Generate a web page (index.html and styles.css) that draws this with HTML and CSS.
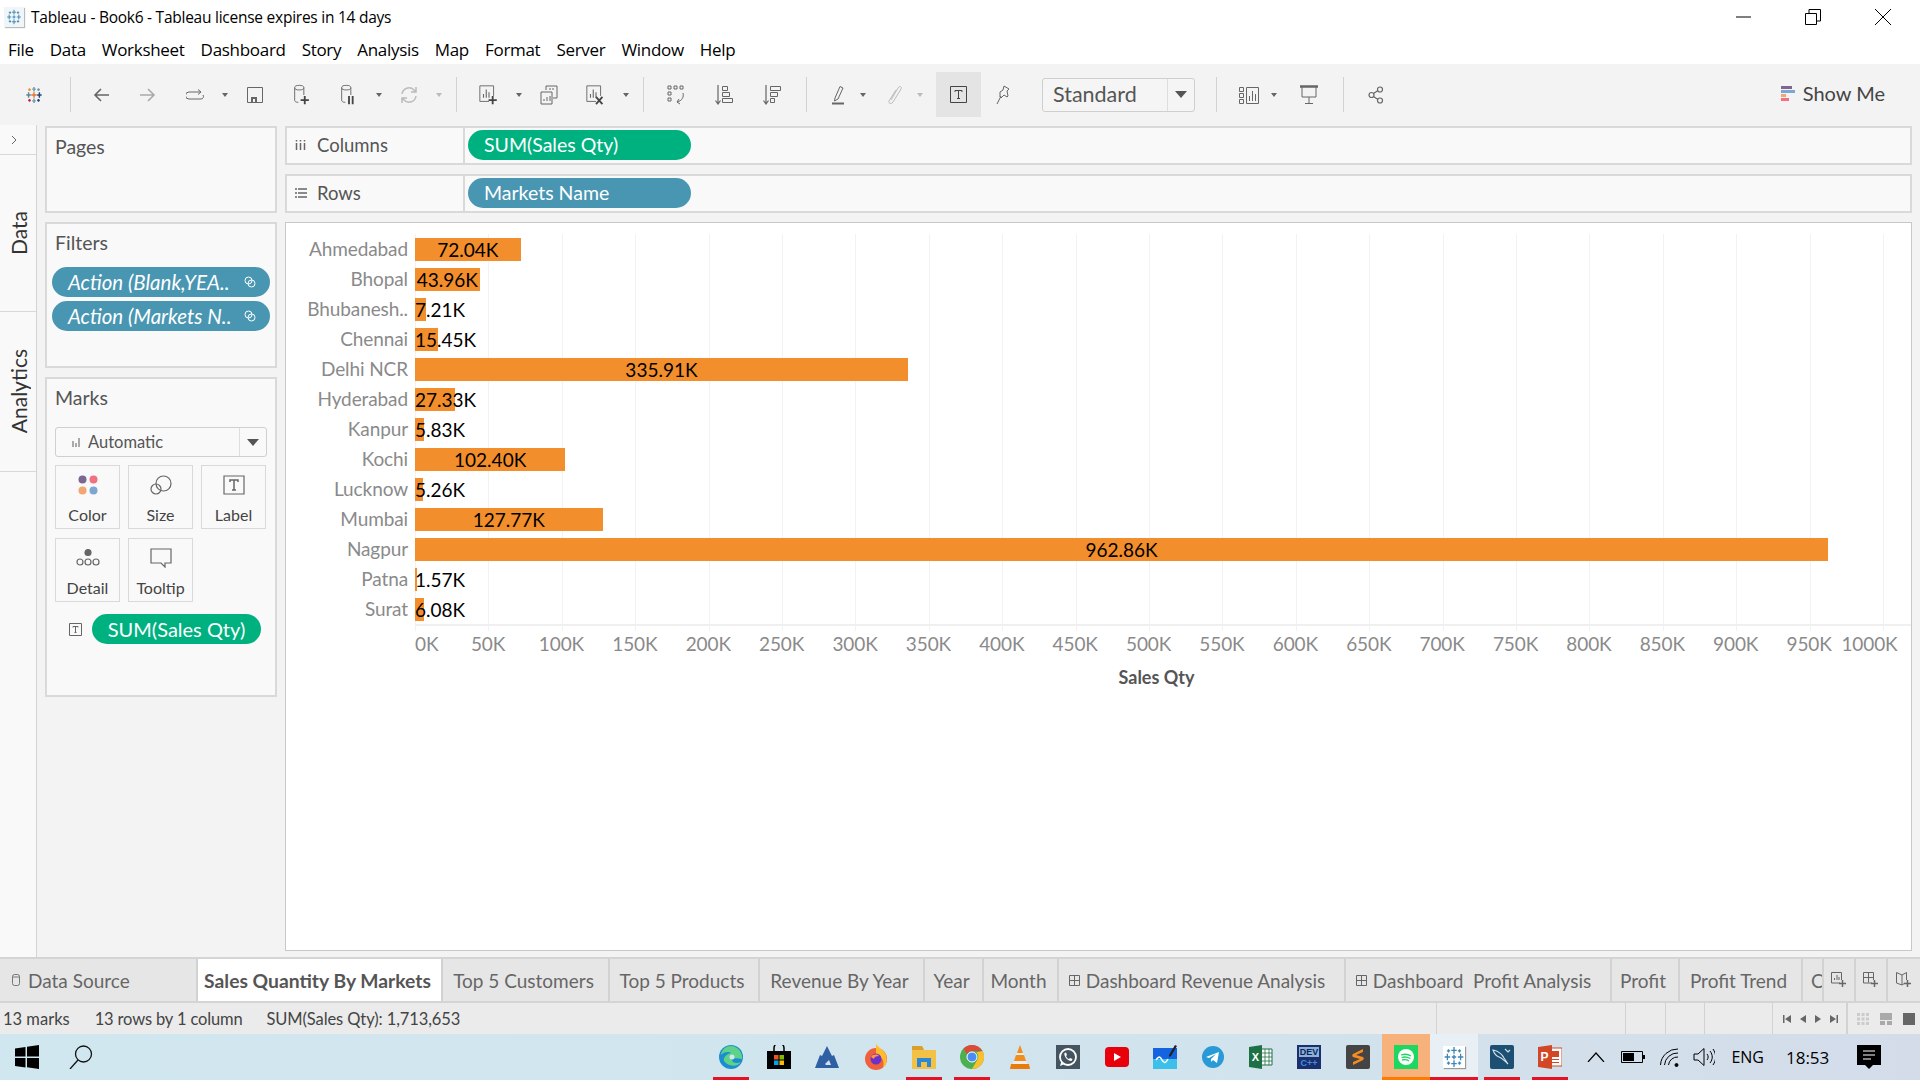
FILE: index.html
```html
<!DOCTYPE html>
<html lang="en">
<head>
    <meta charset="UTF-8">
    <title>Tableau - Book6 - Tableau license expires in 14 days</title>
    <link rel="stylesheet" href="styles.css">
</head>
<body>
    <svg class="defs" width="0" height="0">
        <symbol id="logo" viewBox="0 0 20 20">
            <path d="M10 1v6M7.5 4h5M10 13v6M7.5 16h5M4 7v6M1.5 10h5M16 7v6M13.500 10h5M5 3v3M3.500 4.500h3M15 3v3M13.500 4.500h3M5 14v3M3.500 15.500h3M15 14v3M13.500 15.500h3M10 8v4M8 10h4" fill="none" stroke="currentColor" stroke-width="1.200"/>
        </symbol>
        <symbol id="db" viewBox="0 0 20 24">
            <ellipse cx="7" cy="4" rx="5" ry="2.500" fill="none" stroke="#666"/>
            <path d="M2 4v14c0 1 1.500 2 4 2M12 4v8" fill="none" stroke="#666"/>
        </symbol>
        <symbol id="sheet" viewBox="0 0 22 24">
            <path d="M11 19H1V2h15v11" fill="none" stroke="#666"/>
            <path d="M5 15v-4M8 15V6M11 15V9" stroke="#666" fill="none" stroke-width="1.200"/>
        </symbol>
    </svg>

    <div class="titlebar">
        <span class="app-icon"><svg width="16" height="16"><use href="#logo"/></svg></span>
        <span class="title-text">Tableau - Book6 - Tableau license expires in 14 days</span>
        <div class="win-btns">
            <svg width="16" height="16" viewBox="0 0 16 16"><path d="M1 8h15" stroke="#000"/></svg>
            <svg width="16" height="16" viewBox="0 0 16 16"><path d="M.5 4.500h11v11H.5zM4 4V.5h11.500V12H12" fill="none" stroke="#000"/></svg>
            <svg width="16" height="16" viewBox="0 0 16 16"><path d="M0 0l16 16M16 0L0 16" stroke="#000"/></svg>
        </div>
    </div>

    <nav class="menubar">
        <span>File</span><span>Data</span><span>Worksheet</span><span>Dashboard</span><span>Story</span><span>Analysis</span><span>Map</span><span>Format</span><span>Server</span><span>Window</span><span>Help</span>
    </nav>

    <div class="toolbar">
        <span class="tool-logo">
            <svg width="18" height="18" viewBox="0 0 20 20" fill="none" stroke-width="1.600">
                <path d="M10 1v5M8 3.500h4M10 14v5M8 16.500h4" stroke="#7099a6"/>
                <path d="M4 7v6M1.500 10h5" stroke="#59879b"/>
                <path d="M16 7v6M13.500 10h5" stroke="#1f447e"/>
                <path d="M10 7v6M7 10h6" stroke="#e8762b"/>
                <path d="M5 2.500v3M3.500 4h3" stroke="#eb912b"/>
                <path d="M15 2.500v3M13.500 4h3" stroke="#7099a6"/>
                <path d="M5 14.500v3M3.500 16h3" stroke="#c72035"/>
                <path d="M15 14.500v3M13.500 16h3" stroke="#1f457e"/>
            </svg>
        </span>
        <i class="sep"></i>
        <span class="tool"><svg width="16" height="14" viewBox="0 0 16 14"><path d="M16 7H2M8 1L2 7l6 6" fill="none" stroke="#666" stroke-width="1.600"/></svg></span>
        <span class="tool gap"><svg width="16" height="14" viewBox="0 0 16 14"><path d="M0 7h14M8 1l6 6-6 6" fill="none" stroke="#aaa" stroke-width="1.600"/></svg></span>
        <span class="tool gap"><svg width="18" height="12" viewBox="0 0 18 12"><path d="M14 3H3a2.500 2.500 0 0 0 0 7h12a2.500 2.500 0 0 0 2-4M12 .5L15 3l-3 2.500" fill="none" stroke="#666"/></svg></span>
        <span class="drop"></span>
        <span class="tool"><svg width="16" height="16" viewBox="0 0 16 16"><path d="M.5.5h15v15H.5z" fill="none" stroke="#666"/><path d="M4 15v-5h6v5H8v-3H6v3z" fill="#666"/></svg></span>
        <span class="tool gap"><svg width="20" height="22" viewBox="0 0 20 24"><use href="#db"/><path d="M13 13v9M8.500 17.500h9" stroke="#444" stroke-width="2"/></svg></span>
        <span class="tool gap"><svg width="20" height="22" viewBox="0 0 20 24"><use href="#db"/><path d="M10 13v9M14 13v9" stroke="#444" stroke-width="2"/></svg></span>
        <span class="drop"></span>
        <span class="tool"><svg width="18" height="20" viewBox="0 0 18 20" fill="none" stroke="#bbb" stroke-width="1.500"><path d="M2 9a7 7 0 0 1 12-4l2 2M16 11a7 7 0 0 1-12 4l-2-2M16 2v5h-5M2 18v-5h5"/></svg></span>
        <span class="drop light"></span>
        <i class="sep tight"></i>
        <span class="tool"><svg width="22" height="22" viewBox="0 0 22 24"><use href="#sheet"/><path d="M15 13v9M10.500 17.500h9" stroke="#444" stroke-width="2"/></svg></span>
        <span class="drop"></span>
        <span class="tool"><svg width="18" height="20" viewBox="0 0 18 20" fill="none" stroke="#666"><path d="M6 5V1h11v12h-4"/><path d="M1 7h11v12H1zM4 16v-2M7 16v-4M10 16v-5M10 5V3M13 5V3"/></svg></span>
        <span class="tool gap"><svg width="22" height="22" viewBox="0 0 22 24"><use href="#sheet"/><path d="M11 14l7 8M18 14l-7 8" stroke="#444" stroke-width="2"/></svg></span>
        <span class="drop"></span>
        <i class="sep tight"></i>
        <span class="tool"><svg width="18" height="20" viewBox="0 0 18 20" fill="none" stroke="#666"><path d="M1 1h3v3H1zM7 1h3v3H7zM13 1h3v3h-3zM1 7h3v3H1zM1 13h3v3H1zM16 8c1 4-1 8-6 9M12 14l-2 3 3 2"/></svg></span>
        <span class="tool gap wider"><svg width="18" height="20" viewBox="0 0 18 20" fill="none" stroke="#666"><path d="M3 0v18M.5 15.500L3 19l2.500-3.500" stroke-width="1.200"/><path d="M7.500 1.500h5v4h-5zM7.500 7.500h7v4h-7zM7.500 13.500h10v4h-10z"/></svg></span>
        <span class="tool gap wider"><svg width="18" height="20" viewBox="0 0 18 20" fill="none" stroke="#666"><path d="M3 0v18M.5 15.500L3 19l2.500-3.500" stroke-width="1.200"/><path d="M7.500 1.500h10v4h-10zM7.500 7.500h7v4h-7zM7.500 13.500h4v4h-4z"/></svg></span>
        <i class="sep wide"></i>
        <span class="tool"><svg width="14" height="20" viewBox="0 0 14 20" fill="none" stroke="#666"><path d="M4 13L9 1.500l3 1.500-5 11-3.500 2z"/><path d="M1 18.500h12" stroke-width="2"/></svg></span>
        <span class="drop narrow"></span>
        <span class="tool after-drop"><svg width="14" height="20" viewBox="0 0 14 20" fill="none" stroke="#bbb"><path d="M3 15L10 3c2-3 4-1 3 1L5 17c-2 3-5 1-4-1L8 5"/></svg></span>
        <span class="drop narrow light"></span>
        <span class="tool sel"><svg width="17" height="17" viewBox="0 0 17 17" fill="none" stroke="#444"><path d="M.5.5h16v16H.5z"/><path d="M5 6V4.500h7V6M8.500 4.500v8M7 12.500h3"/></svg></span>
        <span class="tool after-drop"><svg width="14" height="20" viewBox="0 0 14 20" fill="none" stroke="#666"><path d="M8 1l5 3-2 2 1 5-1 1-3-2-3 3-1-1 0-5 3-2z"/><path d="M5 11l-4 8"/></svg></span>
        <span class="combo"><span class="combo-text">Standard</span><span class="combo-arrow"></span></span>
        <i class="sep combo-sep"></i>
        <span class="tool"><svg width="20" height="18" viewBox="0 0 20 18" fill="none" stroke="#666"><path d="M.5 1.500h4v4h-4zM.5 7.500h4v4h-4zM.5 13.500h4v4h-4zM7.500 1.500h12v16h-12zM10.500 15v-5M13.500 15V5M16.500 15V8"/></svg></span>
        <span class="drop narrow"></span>
        <span class="tool present"><svg width="18" height="20" viewBox="0 0 18 20" fill="none" stroke="#666"><path d="M0 1.500h18" stroke-width="2.500"/><path d="M2 2v10h14V2M9 12v6M5 18.500h8"/></svg></span>
        <i class="sep tight-r"></i>
        <span class="tool"><svg width="16" height="18" viewBox="0 0 16 18" fill="none" stroke="#666" stroke-width="1.200"><circle cx="3.500" cy="9" r="2.500"/><circle cx="12" cy="3.500" r="2.500"/><circle cx="12" cy="14.500" r="2.500"/><path d="M5.500 7.500l4.500-3M5.500 10.500l4.500 3"/></svg></span>
        <span class="showme">
            <span class="sm-icon"><i class="s1"></i><i class="s2"></i><i class="s3"></i><i class="s4"></i></span>
            Show Me
        </span>
    </div>

    <div class="workspace">
        <aside class="side-tabs">
            <div class="side-top"><svg width="6" height="10" viewBox="0 0 6 10"><path d="M1 1l4 4-4 4" fill="none" stroke="#666"/></svg></div>
            <div class="side-tab data-tab"><span>Data</span></div>
            <div class="side-tab analytics-tab"><span>Analytics</span></div>
        </aside>

        <section class="cards">
            <div class="card pages-card"><h3>Pages</h3></div>
            <div class="card filters-card">
                <h3>Filters</h3>
                <div class="pill filter-pill"><em>Action (Blank,YEA..</em><svg width="12" height="12" viewBox="0 0 12 12" fill="none" stroke="#fff"><circle cx="4.500" cy="4.500" r="3.500"/><circle cx="7.500" cy="7.500" r="3.500"/></svg></div>
                <div class="pill filter-pill"><em>Action (Markets N..</em><svg width="12" height="12" viewBox="0 0 12 12" fill="none" stroke="#fff"><circle cx="4.500" cy="4.500" r="3.500"/><circle cx="7.500" cy="7.500" r="3.500"/></svg></div>
            </div>
            <div class="card marks-card">
                <h3>Marks</h3>
                <div class="marks-select">
                    <svg width="10" height="10" viewBox="0 0 10 10"><path d="M1 4h2v6H1zM4 6h2v4H4zM7 1h2v9H7z" fill="#aaa"/></svg>
                    <span class="marks-type">Automatic</span>
                    <span class="combo-arrow"></span>
                </div>
                <div class="marks-grid">
                    <div class="mark-btn">
                        <svg width="20" height="20" viewBox="0 0 20 20"><circle cx="4.500" cy="4.500" r="4" fill="#7b6790"/><circle cx="15.500" cy="4.500" r="4" fill="#f2707f"/><circle cx="4.500" cy="15.500" r="4" fill="#f2a672"/><circle cx="15.500" cy="15.500" r="4" fill="#7ea6d3"/></svg>
                        <span>Color</span>
                    </div>
                    <div class="mark-btn">
                        <svg width="22" height="20" viewBox="0 0 22 20" fill="none" stroke="#666" stroke-width="1.200"><circle cx="13.500" cy="8.500" r="7.500"/><circle cx="6" cy="14" r="5"/></svg>
                        <span>Size</span>
                    </div>
                    <div class="mark-btn">
                        <svg width="22" height="20" viewBox="0 0 22 20" fill="none" stroke="#666" stroke-width="1.200"><path d="M1 1h20v18H1z"/><path d="M7 7V5h8v2M11 5v10M9 15h4" stroke-width="1.500"/></svg>
                        <span>Label</span>
                    </div>
                    <div class="mark-btn">
                        <svg width="24" height="20" viewBox="0 0 24 20" fill="none" stroke="#666" stroke-width="1.200"><circle cx="12" cy="4.500" r="3" fill="#666"/><circle cx="4" cy="14" r="3"/><circle cx="12" cy="14" r="3"/><circle cx="20" cy="14" r="3"/></svg>
                        <span>Detail</span>
                    </div>
                    <div class="mark-btn">
                        <svg width="22" height="20" viewBox="0 0 22 20" fill="none" stroke="#666" stroke-width="1.200"><path d="M1 1h20v14h-6v4l-4-4H1z"/></svg>
                        <span>Tooltip</span>
                    </div>
                </div>
                <div class="mark-field">
                    <svg width="13" height="13" viewBox="0 0 13 13" fill="none" stroke="#666"><path d="M.5.5h12v12H.5z"/><path d="M4 4.500V3.500h5v1M6.500 3.500v6M5.500 9.500h2"/></svg>
                    <div class="pill green mark-pill">SUM(Sales Qty)</div>
                </div>
            </div>
        </section>

        <section class="sheet">
            <div class="shelf">
                <div class="shelf-label">
                    <svg width="12" height="12" viewBox="0 0 12 12"><path d="M1.500 1v1.500M1.500 4v7M5.500 1v1.500M5.500 4v7M9.500 1v1.500M9.500 4v7" stroke="#666" stroke-width="1.500"/></svg>
                    <span>Columns</span>
                </div>
                <div class="pill green shelf-pill">SUM(Sales Qty)</div>
            </div>
            <div class="shelf">
                <div class="shelf-label">
                    <svg width="12" height="12" viewBox="0 0 12 12"><path d="M0 2h2M3 2h9M0 6h2M3 6h9M0 10h2M3 10h9" stroke="#666" stroke-width="1.400"/></svg>
                    <span>Rows</span>
                </div>
                <div class="pill blue shelf-pill">Markets Name</div>
            </div>

            <div class="view">
                <div class="chart">
                    <div class="row"><span class="row-name">Ahmedabad</span><div class="plot"><div class="bar" style="width:105.7px"><b>72.04K</b></div></div></div>
                    <div class="row"><span class="row-name">Bhopal</span><div class="plot"><div class="bar" style="width:64.5px"><b>43.96K</b></div></div></div>
                    <div class="row"><span class="row-name">Bhubanesh..</span><div class="plot"><div class="bar" style="width:10.6px"><b>7.21K</b></div></div></div>
                    <div class="row"><span class="row-name">Chennai</span><div class="plot"><div class="bar" style="width:22.7px"><b>15.45K</b></div></div></div>
                    <div class="row"><span class="row-name">Delhi NCR</span><div class="plot"><div class="bar" style="width:492.9px"><b>335.91K</b></div></div></div>
                    <div class="row"><span class="row-name">Hyderabad</span><div class="plot"><div class="bar" style="width:40.1px"><b>27.33K</b></div></div></div>
                    <div class="row"><span class="row-name">Kanpur</span><div class="plot"><div class="bar" style="width:8.6px"><b>5.83K</b></div></div></div>
                    <div class="row"><span class="row-name">Kochi</span><div class="plot"><div class="bar" style="width:150.3px"><b>102.40K</b></div></div></div>
                    <div class="row"><span class="row-name">Lucknow</span><div class="plot"><div class="bar" style="width:7.7px"><b>5.26K</b></div></div></div>
                    <div class="row"><span class="row-name">Mumbai</span><div class="plot"><div class="bar" style="width:187.5px"><b>127.77K</b></div></div></div>
                    <div class="row"><span class="row-name">Nagpur</span><div class="plot"><div class="bar" style="width:1413px"><b>962.86K</b></div></div></div>
                    <div class="row"><span class="row-name">Patna</span><div class="plot"><div class="bar" style="width:2.3px"><b>1.57K</b></div></div></div>
                    <div class="row"><span class="row-name">Surat</span><div class="plot"><div class="bar" style="width:8.9px"><b>6.08K</b></div></div></div>
                </div>
                <div class="axis-line"></div>
                <div class="axis">
                    <span>0K</span><span>50K</span><span>100K</span><span>150K</span><span>200K</span><span>250K</span><span>300K</span><span>350K</span><span>400K</span><span>450K</span><span>500K</span><span>550K</span><span>600K</span><span>650K</span><span>700K</span><span>750K</span><span>800K</span><span>850K</span><span>900K</span><span>950K</span><span>1000K</span>
                </div>
                <div class="axis-title">Sales Qty</div>
            </div>
        </section>
    </div>

    <div class="tabs">
        <div class="tab tab-source"><svg width="8" height="12" viewBox="0 0 8 12" fill="none" stroke="#777"><rect x=".5" y=".5" width="7" height="11" rx="2"/><path d="M.5 3h7"/></svg>Data Source</div>
        <div class="tab tab-active">Sales Quantity By Markets</div>
        <div class="tab tab-customers">Top 5 Customers</div>
        <div class="tab tab-products">Top 5 Products</div>
        <div class="tab tab-revenue">Revenue By Year</div>
        <div class="tab tab-year">Year</div>
        <div class="tab tab-month">Month</div>
        <div class="tab tab-dra"><svg width="11" height="11" viewBox="0 0 11 11" fill="none" stroke="#666"><path d="M.5.5h10v10H.5zM5.500.5v10M.5 5.500h10"/></svg>Dashboard Revenue Analysis</div>
        <div class="tab tab-dpa"><svg width="11" height="11" viewBox="0 0 11 11" fill="none" stroke="#666"><path d="M.5.5h10v10H.5zM5.500.5v10M.5 5.500h10"/></svg>Dashboard&nbsp; Profit Analysis</div>
        <div class="tab tab-profit">Profit</div>
        <div class="tab tab-trend">Profit Trend</div>
        <div class="tab tab-cut">C</div>
        <div class="tab tab-new"><svg width="16" height="16" viewBox="0 0 16 16" fill="none" stroke="#666"><path d="M9 11H.5V.5h10V8M3.500 8V6M6 8V3M8 8V5"/><path d="M11.500 8v7M8 11.500h7" stroke-width="1.500"/></svg></div>
        <div class="tab tab-new"><svg width="16" height="16" viewBox="0 0 16 16" fill="none" stroke="#666"><path d="M9 11H.5V.5h10V8M.5 5.500h10M5.500.5v10"/><path d="M11.500 8v7M8 11.500h7" stroke-width="1.500"/></svg></div>
        <div class="tab tab-new"><svg width="16" height="16" viewBox="0 0 16 16" fill="none" stroke="#666"><path d="M9 11l-3 2V3L.5.5V11L6 13M6 3l4.500-2.500V8"/><path d="M11.500 8v7M8 11.500h7" stroke-width="1.500"/></svg></div>
    </div>

    <div class="statusbar">
        <span class="st-marks">13 marks</span>
        <span class="st-rows">13 rows by 1 column</span>
        <span class="st-sum">SUM(Sales Qty): 1,713,653</span>
        <i class="st-cell c1"></i><i class="st-cell c2"></i><i class="st-cell c3"></i><i class="st-cell c4"></i>
        <div class="st-cell st-nav">
            <svg width="8" height="8" viewBox="0 0 8 8"><path d="M0 0h1.500v8H0zM8 0v8L2 4z" fill="#666"/></svg>
            <svg width="6" height="8" viewBox="0 0 6 8"><path d="M6 0v8L0 4z" fill="#666"/></svg>
            <svg width="6" height="8" viewBox="0 0 6 8"><path d="M0 0v8l6-4z" fill="#666"/></svg>
            <svg width="8" height="8" viewBox="0 0 8 8"><path d="M8 0H6.500v8H8zM0 0v8l6-4z" fill="#666"/></svg>
        </div>
        <div class="st-cell st-zoom">
            <svg width="12" height="12" viewBox="0 0 12 12" fill="#ccc"><path d="M0 0h3v3H0zM4.500 0h3v3h-3zM9 0h3v3H9zM0 4.500h3v3H0zM4.500 4.500h3v3h-3zM9 4.500h3v3H9zM0 9h3v3H0zM4.500 9h3v3h-3zM9 9h3v3H9z"/></svg>
            <svg width="12" height="12" viewBox="0 0 12 12" fill="#aaa"><path d="M0 0h12v7H0zM0 8h5v4H0zM7 8h5v4H7z"/></svg>
            <svg width="12" height="12" viewBox="0 0 12 12" fill="#666"><path d="M0 0h12v12H0z"/></svg>
        </div>
    </div>

    <footer class="taskbar">
        <span class="tk-start">
            <svg width="24" height="24" viewBox="0 0 24 24"><path d="M0 3.500l10.500-1.500v9.500H0zM12 1.800L24 0v11.500H12zM0 13h10.500v9.500L0 21zM12 13h12v11l-12-1.800z" fill="#000"/></svg>
        </span>
        <span class="tk-search">
            <svg width="24" height="24" viewBox="0 0 24 24" fill="none" stroke="#111" stroke-width="1.300"><circle cx="14.500" cy="9" r="8"/><path d="M9 15L1 24"/></svg>
        </span>
        <div class="tk-apps">
            <span class="app on">
                <svg width="24" height="24" viewBox="0 0 24 24"><circle cx="12" cy="12" r="12" fill="#1c8ed0"/><path d="M5 16c4 6 14 6 17 1-4 2-9 1-9-2 0-2 4-2 10-1 1-6-4-13-11-13C6 1 2 6 2 10c2-3 8-4 10-2-4 1-8 4-7 8z" fill="#5fd28a"/><circle cx="13" cy="12" r="2.500" fill="#d1e6ef"/></svg>
            </span>
            <span class="app">
                <svg width="24" height="24" viewBox="0 0 24 24"><path d="M0 6h24v18H0z" fill="#000"/><path d="M7 7V3a5 5 0 0 1 10 0v4" fill="none" stroke="#000" stroke-width="1.500"/><path d="M7 10h4.500v4.500H7z" fill="#f25022"/><path d="M12.500 10H17v4.500h-4.500z" fill="#7fba00"/><path d="M7 15.500h4.500V20H7z" fill="#00a4ef"/><path d="M12.500 15.500H17V20h-4.500z" fill="#ffb900"/></svg>
            </span>
            <span class="app">
                <svg width="24" height="24" viewBox="0 0 24 24"><path d="M12 1l5 10 2-1 5 13H0l5-13 2 1z" fill="#2f5fa5"/><path d="M10 19l4-4 2 5h-5z" fill="#d1e0ea"/></svg>
            </span>
            <span class="app">
                <svg width="24" height="26" viewBox="0 0 24 26"><circle cx="12" cy="15" r="11" fill="#f0603a"/><path d="M12 0c2 3 6 5 9 9 3 6 2 12-2 14 2-6-1-11-7-11z" fill="#ffbd2e"/><circle cx="12" cy="15" r="5.500" fill="#6a32c9"/><path d="M7 13c2-3 6-3 8-1-3 0-5 1-5 3z" fill="#ff9640"/></svg>
            </span>
            <span class="app on">
                <svg width="24" height="24" viewBox="0 0 24 24"><path d="M0 1h10l2 4h12v19H0z" fill="#f3c145"/><path d="M0 1h10l2 4H0z" fill="#d9a12b"/><path d="M5 13h14v9h-4v-5H9v5H5z" fill="#2a88d8"/></svg>
            </span>
            <span class="app on">
                <svg width="24" height="24" viewBox="0 0 24 24"><circle cx="12" cy="12" r="12" fill="#4caf50"/><path d="M12 0a12 12 0 0 1 10.400 6H12a6 6 0 0 0-5.200 3L3.500 3.500A12 12 0 0 1 12 0z" fill="#e0483a"/><path d="M22.400 6A12 12 0 0 1 12 24l5.200-9a6 6 0 0 0-1-7.500z" fill="#fbc02d"/><circle cx="12" cy="12" r="5" fill="#4c8bf5" stroke="#fff"/></svg>
            </span>
            <span class="app">
                <svg width="20" height="24" viewBox="0 0 20 24"><path d="M10 0l3 8H7zM6 10h8l2 6H4z" fill="#f28c1e"/><path d="M7 8h6l1 2H6zM4 16h12l1 3H3z" fill="#eee"/><path d="M1 19h18l1 5H0z" fill="#e87b0c"/></svg>
            </span>
            <span class="app">
                <svg width="24" height="24" viewBox="0 0 24 24"><path d="M0 0h24v24H0z" fill="#445460"/><circle cx="12" cy="12" r="8" fill="none" stroke="#fff" stroke-width="1.800"/><path d="M8.500 8c-1 3 3 8 7 8l1-2-2.500-1-1 1c-1 0-2.500-1.500-3-3l1-1-1-2.500z" fill="#fff"/><path d="M4 21l1.500-5 3 3z" fill="#fff"/></svg>
            </span>
            <span class="app">
                <svg width="24" height="20" viewBox="0 0 24 20"><rect width="24" height="20" rx="4" fill="#e8000b"/><path d="M9 6v8l7-4z" fill="#fff"/></svg>
            </span>
            <span class="app">
                <svg width="24" height="24" viewBox="0 0 24 24"><path d="M0 3h24v21H0z" fill="#1464e0"/><path d="M0 14h24v10H0z" fill="#3cc0ea"/><path d="M3 15c3-4 4-4 6 0s4 3 6-1" fill="none" stroke="#fff" stroke-width="1.500"/><path d="M16 10l6-10 2 1-6 10-2 1z" fill="#222"/></svg>
            </span>
            <span class="app">
                <svg width="22" height="22" viewBox="0 0 22 22"><circle cx="11" cy="11" r="11" fill="#2a9ad6"/><path d="M4 11l13-5-2 11-4-3-2 2v-3l5-5-7 4z" fill="#fff"/></svg>
            </span>
            <span class="app">
                <svg width="24" height="24" viewBox="0 0 24 24"><path d="M9 4h14v16H9z" fill="#fff" stroke="#1e7145"/><path d="M12 4v16M16 4v16M20 4v16M9 8h14M9 12h14M9 16h14" stroke="#1e7145" stroke-width=".8"/><path d="M0 2l13-2v24L0 22z" fill="#1e7145"/><text x="6.500" y="16" class="ic-text" fill="#fff" font-size="11" text-anchor="middle">X</text></svg>
            </span>
            <span class="app">
                <svg width="24" height="24" viewBox="0 0 24 24"><path d="M0 0h24v24H0z" fill="#1a2f6b"/><path d="M2 2h20v10H2z" fill="#8ab2d8"/><text x="12" y="10" class="ic-text" fill="#10235a" font-size="9" text-anchor="middle">DEV</text><text x="12" y="21" class="ic-text" fill="#3f8fe0" font-size="9" text-anchor="middle">C++</text></svg>
            </span>
            <span class="app">
                <svg width="24" height="24" viewBox="0 0 24 24"><rect width="24" height="24" rx="2" fill="#444"/><path d="M17 4L7 9c-1 1-1 2 0 3l7 2-7 3v3l10-5c1-1 1-2 0-3l-7-2 7-3z" fill="#f68b1f"/></svg>
            </span>
            <span class="app app-spotify">
                <svg width="24" height="24" viewBox="0 0 24 24"><path d="M0 0h24v24H0z" fill="#1ed760"/><circle cx="12" cy="12" r="8" fill="#fff"/><path d="M7 10c3-1 7-1 10 1M7.500 12.500c3-1 6-.5 9 1M8 15c2-.5 5-.5 7 1" fill="none" stroke="#1ed760" stroke-width="1.300"/></svg>
            </span>
            <span class="app app-tableau">
                <svg class="tk-logo" width="22" height="22"><use href="#logo"/></svg>
            </span>
            <span class="app on">
                <svg width="24" height="24" viewBox="0 0 24 24"><rect width="24" height="24" rx="2" fill="#1d4f73"/><path d="M3 5c5 1 9 4 11 8l4 6c-3-3-6-6-9-7-3-1-5-4-6-7zM15 4l3 3 2-2" fill="none" stroke="#cfe0ea" stroke-width="1.100"/></svg>
            </span>
            <span class="app on">
                <svg width="24" height="24" viewBox="0 0 24 24"><path d="M10 3h14v18H10z" fill="#fff" stroke="#d24726"/><path d="M14 6h7v6h-7z" fill="#d24726"/><path d="M14 14h7v1h-7zM14 17h7v1h-7z" fill="#d24726"/><path d="M0 2l14-2v24L0 22z" fill="#d24726"/><text x="6.500" y="16" class="ic-text" fill="#fff" font-size="12" text-anchor="middle">P</text></svg>
            </span>
        </div>
        <div class="tray">
            <svg class="t-up" width="18" height="10" viewBox="0 0 18 10"><path d="M1 10l8-9 8 9" fill="none" stroke="#000" stroke-width="1.200"/></svg>
            <svg class="t-bat" width="24" height="12" viewBox="0 0 24 12"><path d="M.5.500h21v11H.5z" fill="none" stroke="#000"/><path d="M2 2h11v8H2zM22 4h2v4h-2z" fill="#000"/></svg>
            <svg class="t-wifi" width="20" height="20" viewBox="0 0 20 20" fill="none" stroke="#000"><path d="M.5 18A17 17 0 0 1 18 2M4.500 18A13 13 0 0 1 18 6M8.500 18A9 9 0 0 1 18 10"/><circle cx="16.500" cy="18" r="1.500" fill="#000"/></svg>
            <svg class="t-vol" width="22" height="20" viewBox="0 0 22 20" fill="none" stroke="#000"><path d="M1 7h4l6-5.500v17L5 13H1zM14 7c1.500 2 1.500 4 0 6M17 4c3 4 3 8 0 12M20 2c3.500 5 3.500 11 0 16"/></svg>
            <span class="t-lang">ENG</span>
            <span class="t-time">18:53</span>
            <svg class="t-note" width="24" height="24" viewBox="0 0 24 24"><path d="M0 0h24v20h-8l-4 4-4-4H0z" fill="#000"/><path d="M6 6h12M6 10h12M6 14h8" stroke="#fff"/></svg>
        </div>
    </footer>
</body>
</html>
```

FILE: styles.css
```css
* {
    box-sizing: border-box;
}
body {
    margin: 0;
    width: 1920px;
    height: 1080px;
    overflow: hidden;
    display: flex;
    flex-direction: column;
    background: #f3f3f3;
    font-family: 'Lato', 'Liberation Sans', sans-serif;
    color: #555;
}
svg {
    display: block;
    flex-shrink: 0;
}
.defs {
    position: absolute;
}
.ic-text {
    font-family: 'Liberation Sans', sans-serif;
    font-weight: bold;
}

/* title + menu */
.titlebar {
    height: 34px;
    background: #fff;
    display: flex;
    align-items: center;
    padding-left: 4px;
    color: #000;
    font-family: 'Open Sans', sans-serif;
    font-size: 15.5px;
    letter-spacing: -0.25px;
}
.app-icon {
    width: 20px;
    height: 20px;
    margin-right: 7px;
    display: flex;
    align-items: center;
    justify-content: center;
    background: #f0f5f8;
    color: #3d86b5;
    box-shadow: 1px 1px 1px #bbb;
}
.win-btns {
    margin-left: auto;
    display: flex;
    gap: 54px;
    padding-right: 29px;
}
.menubar {
    height: 30px;
    background: #fff;
    display: flex;
    align-items: center;
    gap: 16px;
    padding: 0 0 0 8px;
    color: #000;
    font-family: 'Open Sans', sans-serif;
    font-size: 17px;
    letter-spacing: -0.3px;
}

/* toolbar */
.toolbar {
    height: 61px;
    background: #f3f3f3;
    display: flex;
    align-items: center;
    flex-shrink: 0;
}
.tool-logo {
    width: 68px;
    display: flex;
    justify-content: center;
}
.sep {
    width: 1px;
    height: 35px;
    background: #d2d2d2;
    margin: 0 15px 0 2px;
}
.sep.tight {
    margin: 0 17px 0 2px;
}
.sep.wide {
    margin: 0 16px 0 19px;
}
.sep.combo-sep {
    margin: 0 17px 0 21px;
}
.sep.tight-r {
    margin: 0 17px 0 19px;
}
.tool {
    width: 30px;
    height: 45px;
    display: flex;
    align-items: center;
    justify-content: center;
}
.tool.gap {
    margin-left: 17px;
}
.tool.gap.wider {
    margin-left: 18px;
}
.tool.after-drop {
    margin-left: 7px;
}
.tool.present {
    margin-left: 10px;
}
.tool.sel {
    width: 45px;
    margin-left: 6px;
    background: #e4e4e4;
}
.drop {
    width: 30px;
    display: flex;
    justify-content: center;
}
.drop.narrow {
    width: 20px;
}
.drop::after {
    content: "";
    border: 3px solid transparent;
    border-top: 4px solid #666;
    border-bottom: 0;
}
.drop.light::after {
    border-top-color: #bbb;
}
.combo {
    width: 153px;
    height: 34px;
    margin-left: 24px;
    display: flex;
    align-items: center;
    background: #f5f5f5;
    border: 1px solid #cfcfcf;
    border-radius: 3px;
}
.combo-text {
    flex: 1;
    height: 100%;
    line-height: 31px;
    padding-left: 10px;
    font-size: 21.5px;
    border-right: 1px solid #dedede;
}
.combo-arrow {
    width: 26px;
    display: flex;
    justify-content: center;
}
.combo-arrow::after {
    content: "";
    border: 6px solid transparent;
    border-top: 7px solid #555;
    border-bottom: 0;
}
.showme {
    margin-left: auto;
    padding: 0 35px 3px 0;
    display: flex;
    align-items: center;
    gap: 8px;
    font-size: 20px;
    color: #444;
}
.sm-icon {
    display: flex;
    flex-direction: column;
    gap: 1px;
    width: 14px;
}
.sm-icon i {
    height: 3px;
}
.s1 { background: #7b6790; width: 11px; }
.s2 { background: #7ea6d3; width: 14px; }
.s3 { background: #f2a672; width: 5px; }
.s4 { background: #f2707f; width: 8px; }

/* middle */
.workspace {
    height: 833px;
    display: flex;
}
.side-tabs {
    width: 37px;
    flex-shrink: 0;
    background: #f9f9f9;
    border-right: 1px solid #d4d4d4;
    display: flex;
    flex-direction: column;
}
.side-top {
    height: 30px;
    border-bottom: 1px solid #d8d8d8;
    display: flex;
    align-items: center;
    padding-left: 11px;
}
.side-tab {
    display: flex;
    align-items: center;
    justify-content: center;
    border-bottom: 1px solid #d8d8d8;
    color: #333;
    font-size: 21px;
}
.side-tab span {
    writing-mode: vertical-rl;
    transform: rotate(180deg);
}
.data-tab {
    height: 157px;
}
.analytics-tab {
    height: 160px;
}
.cards {
    width: 232px;
    flex-shrink: 0;
    margin: 1px 0 0 8px;
    display: flex;
    flex-direction: column;
    gap: 9px;
}
.card {
    background: #f9f9f9;
    border: 2px solid #d9d9d9;
    padding: 0 0 0 8px;
}
.card h3 {
    margin: 0;
    font-weight: normal;
    font-size: 19.5px;
    color: #555;
}
.pages-card {
    height: 87px;
    padding-top: 7px;
}
.filters-card {
    height: 146px;
    padding-top: 7px;
    padding-left: 0;
}
.filters-card h3 {
    margin: 0 0 13px 8px;
}
.marks-card {
    height: 320px;
    padding-top: 7px;
}
.pill {
    border-radius: 15px;
    height: 30px;
    color: #fff;
    display: flex;
    align-items: center;
    font-size: 18px;
}
.green {
    background: #00b180;
}
.blue {
    background: #4996b2;
}
.filter-pill {
    width: 218px;
    margin: 0 0 4px 5px;
    padding: 0 14px 0 16px;
    background: #4996b2;
    justify-content: space-between;
    white-space: nowrap;
    font-size: 20.5px;
}
.marks-select {
    width: 212px;
    height: 30px;
    margin-top: 18px;
    display: flex;
    align-items: center;
    background: #f9f9f9;
    border: 1px solid #cfcfcf;
    border-radius: 3px;
    padding-left: 15px;
    font-size: 16.5px;
}
.marks-type {
    flex: 1;
    height: 100%;
    line-height: 28px;
    padding-left: 7px;
    border-right: 1px solid #dedede;
}
.marks-select .combo-arrow {
    width: 26px;
}
.marks-grid {
    margin-top: 8px;
    display: grid;
    grid-template-columns: repeat(3, 65px);
    grid-auto-rows: 64px;
    gap: 9px 8px;
}
.mark-btn {
    border: 1px solid #d9d9d9;
    display: flex;
    flex-direction: column;
    align-items: center;
    padding-top: 9px;
    font-size: 16px;
    color: #444;
}
.mark-btn span {
    margin-top: 10px;
}
.mark-field {
    margin-top: 12px;
    display: flex;
    align-items: center;
    padding-left: 14px;
    gap: 10px;
}
.mark-pill {
    width: 169px;
    justify-content: center;
    font-size: 20px;
}

/* shelves + view */
.sheet {
    flex: 1;
    min-width: 0;
    margin: 1px 8px 0 8px;
    display: flex;
    flex-direction: column;
    gap: 9px;
}
.shelf {
    height: 39px;
    display: flex;
    align-items: center;
    background: #f9f9f9;
    border: 2px solid #d9d9d9;
}
.shelf-label {
    width: 178px;
    height: 100%;
    display: flex;
    align-items: center;
    gap: 10px;
    padding: 0 0 2px 8px;
    border-right: 2px solid #d9d9d9;
    font-size: 18.5px;
}
.shelf-pill {
    width: 223px;
    margin: 0 0 2px 3px;
    padding-left: 16px;
    font-size: 19.5px;
}
.view {
    flex: 1;
    background: #fff;
    border: 1px solid #c8c8c8;
    padding-top: 11px;
    margin-bottom: 7px;
}
.chart {
    height: 390px;
}
.row {
    height: 30px;
    display: flex;
}
.row-name {
    width: 122px;
    text-align: right;
    line-height: 30px;
    font-size: 19px;
    letter-spacing: -0.1px;
    color: #8a8a8a;
    white-space: nowrap;
}
.plot {
    flex: 1;
    margin-left: 7px;
    display: flex;
    align-items: center;
    background: repeating-linear-gradient(to right, #f2f2f2 0, #f2f2f2 1px, transparent 1px, transparent 73.4px);
}
.bar {
    height: 23px;
    background: #f28e2b;
    display: flex;
    justify-content: safe center;
    align-items: center;
}
.bar b {
    font-weight: normal;
    font-size: 19px;
    color: #000;
    white-space: nowrap;
}
.axis-line {
    margin-left: 129px;
    height: 7px;
    border-top: 2px solid #f0f0f0;
    background: repeating-linear-gradient(to right, #f2f2f2 0, #f2f2f2 1px, transparent 1px, transparent 73.4px);
}
.axis {
    display: flex;
    margin: 1px 0 0 92px;
}
.axis span {
    width: 73.4px;
    flex-shrink: 0;
    text-align: center;
    font-size: 19px;
    letter-spacing: -0.1px;
    color: #8a8a8a;
}
.axis span:first-child {
    padding-left: 24px;
}
.axis span:last-child {
    margin-left: -13px;
}
.axis-title {
    margin-top: 11px;
    padding-left: 116px;
    text-align: center;
    font-size: 18px;
    font-weight: bold;
    color: #555;
}

/* sheet tabs */
.tabs {
    height: 46px;
    display: flex;
    background: #e6e6e6;
    border-top: 2px solid #d4d4d4;
    border-bottom: 2px solid #d4d4d4;
    margin-top: -1px;
}
.tab {
    display: flex;
    align-items: center;
    justify-content: center;
    gap: 6px;
    padding-right: 4px;
    font-size: 19px;
    color: #666;
    border-right: 2px solid #d2d2d2;
    white-space: nowrap;
    flex-shrink: 0;
}
.tab-source { width: 196px; justify-content: flex-start; gap: 8px; padding-left: 12px; border-right: 0; }
.tab-active { width: 247px; background: #fff; font-weight: bold; font-size: 19.3px; color: #555; border-left: 2px solid #d2d2d2; }
.tab-customers { width: 167px; }
.tab-products { width: 150px; }
.tab-revenue { width: 165px; }
.tab-year { width: 59px; }
.tab-month { width: 75px; }
.tab-dra { width: 287px; padding-right: 9px; }
.tab-dpa { width: 266px; padding-right: 9px; }
.tab-profit { width: 68px; }
.tab-trend { width: 123px; }
.tab-cut { width: 21px; overflow: hidden; justify-content: flex-start; padding: 0 0 0 8px; }
.tab-new { width: 32px; padding: 0; }
.tab-new:last-child { border-right: 0; }

/* status */
.statusbar {
    height: 31px;
    display: flex;
    align-items: center;
    background: #ebebeb;
    font-size: 16.5px;
    color: #444;
}
.st-marks { margin-left: 3px; }
.st-rows { margin-left: 25px; letter-spacing: -0.15px; }
.st-sum { margin-left: 24px; letter-spacing: -0.1px; }
.st-cell {
    height: 100%;
    border-left: 1px solid #d2d2d2;
    display: flex;
    align-items: center;
}
.c1 { margin-left: auto; width: 189px; }
.c2 { width: 40px; }
.c3 { width: 39px; }
.c4 { width: 68px; }
.st-nav {
    width: 74px;
    padding-left: 10px;
    gap: 9px;
}
.st-zoom {
    width: 74px;
    padding-left: 9px;
    gap: 11px;
}
.st-nav + .st-zoom { border-left-width: 2px; }

/* windows taskbar */
.taskbar {
    height: 46px;
    flex-shrink: 0;
    display: flex;
    align-items: center;
    background: linear-gradient(to right, #d1e7ef, #d1e4ed 60%, #d4dcea);
    color: #000;
}
.tk-start {
    margin-left: 15px;
}
.tk-search {
    margin-left: 30px;
}
.tk-apps {
    margin-left: 614px;
    display: flex;
    height: 100%;
}
.app {
    width: 48.2px;
    height: 100%;
    display: flex;
    align-items: center;
    justify-content: center;
    position: relative;
}
.app.on::after {
    content: "";
    position: absolute;
    left: 6px;
    right: 6px;
    bottom: 0;
    height: 3px;
    background: #e81123;
}
.app-spotify {
    background: #f6b27a;
    box-shadow: inset 0 -3px 0 #ff7a00;
}
.app-tableau {
    background: #e9f0f5;
    box-shadow: inset 0 -3px 0 #e81123;
}
.tk-logo {
    color: #3d86b5;
    background: #fff;
    box-shadow: 1px 1px 1px #999;
}
.tray {
    display: flex;
    align-items: center;
    margin-left: 13px;
    font-family: 'Open Sans', sans-serif;
    font-size: 16px;
}
.t-bat { margin-left: 16px; }
.t-wifi { margin-left: 15px; }
.t-vol { margin-left: 13px; }
.t-lang { margin-left: 16px; }
.t-time { margin-left: 22px; font-size: 17px; }
.t-note { margin-left: 28px; }
```
